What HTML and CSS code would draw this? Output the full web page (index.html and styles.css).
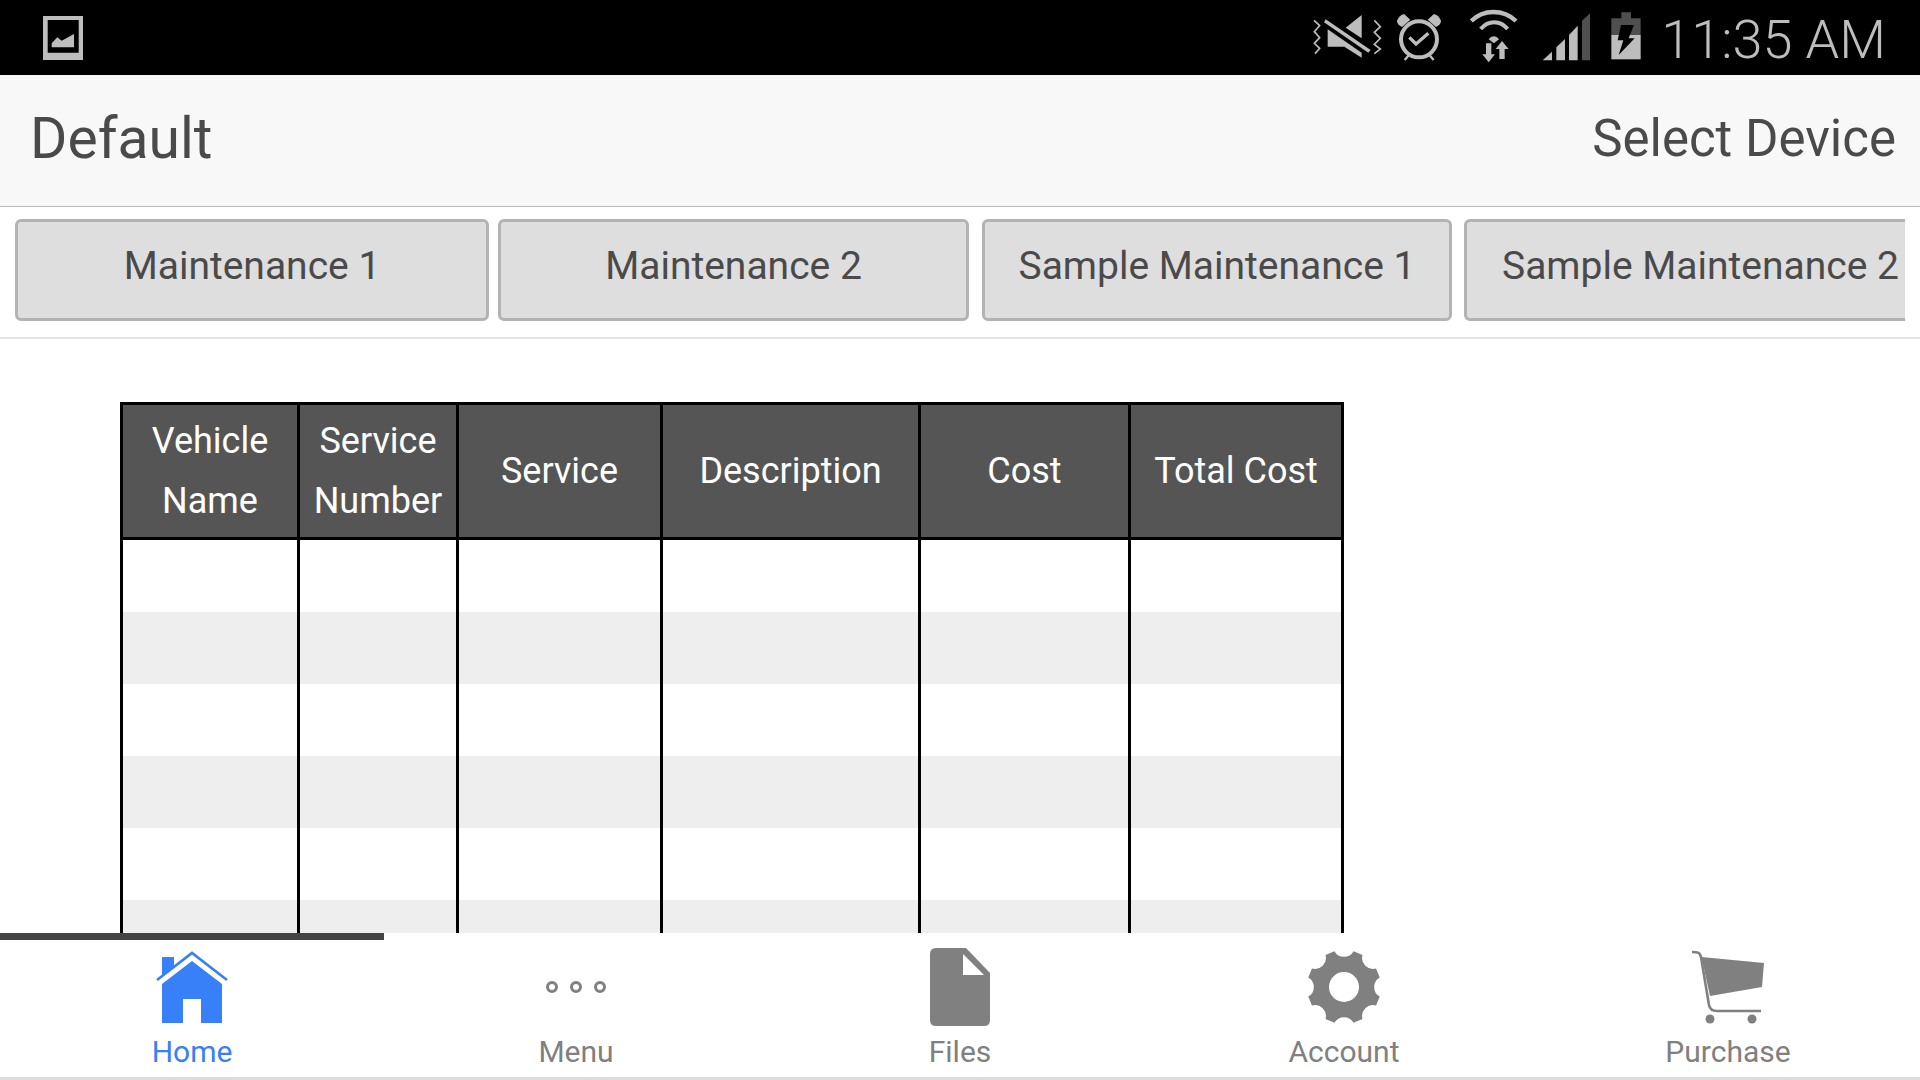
FILE: index.html
```html
<!DOCTYPE html>
<html lang="en">
<head>
<meta charset="utf-8">
<title>Maintenance</title>
<link rel="stylesheet" href="styles.css">
</head>
<body>
<div class="app">
  <div class="status">
    <svg class="pic" viewBox="0 0 40 44" width="40" height="44"><path fill="#bdbdbd" fill-rule="evenodd" d="M0 0H40V44H0ZM4.7 4V36.7H35.7V4ZM8.7 31.3V27.3L14.3 21.3L18.7 24.7L31 18V31.3Z"/></svg>
    <div class="status-right">
      <svg viewBox="0 0 450 195" width="150" height="65">
        <g fill="#bdbdbd">
          <path d="M62 43L197 135L190 143L57 52Z"/>
          <path d="M170 30V100L122 68Z"/>
          <path d="M68 73L170 143V158L118 125H68Z"/>
          <path d="M276 48C280 36 290 28 298 28L316 44L291 66C282 62 276 56 276 48Z"/>
          <path d="M408 48C404 36 394 28 386 28L368 44L393 66C402 62 408 56 408 48Z"/>
        </g>
        <g fill="none" stroke="#bdbdbd">
          <path stroke-width="5" d="M27 46L44 62L28 80L44 98L28 115L44 130L30 146"/>
          <path stroke-width="5" d="M208 46L226 65L208 82L226 100L208 118L226 132L208 146"/>
          <circle cx="342" cy="103" r="54" stroke-width="12"/>
          <path stroke-width="10" d="M313 97L333 117L370 85"/>
          <path stroke-width="7" d="M312 150L299 165M373 150L386 165"/>
        </g>
      </svg>
      <svg class="ico-net" viewBox="0 0 570 195" width="190" height="65">
        <g fill="none" stroke="#bdbdbd">
          <path stroke-width="13" d="M34 48C70 12 130 12 168 48"/>
          <path stroke-width="12" d="M62 72C85 45 120 45 143 72"/>
        </g>
        <g fill="#bdbdbd">
          <path d="M86 103C95 91 108 91 117 103L102 115Z"/>
          <path d="M78 115H94V148H105L86 172L67 148H78Z"/>
          <path d="M118 162V132H107L126 108L146 132H134V162Z"/>
          <path d="M248 166L276 140V166Z"/>
          <path d="M289 166V127L315 102V166Z"/>
          <path d="M327 166V90L353 62V166Z"/>
          <path d="M454 90H542V163H454Z"/>
        </g>
        <path fill="#4f4f4f" d="M366 166V47L390 25V166Z"/>
        <path fill="#4f4f4f" d="M454 40H484V22H513V40H542V90H454Z"/>
        <path fill="#000" d="M483 60H522L506 100H524L476 150L490 106H473Z"/>
      </svg>
      <span class="clock">11:35 AM</span>
    </div>
  </div>
  <header class="top">
    <h1 class="title">Default</h1>
    <span class="device">Select Device</span>
  </header>
  <nav class="tabs">
    <div class="tab-clip">
      <button class="tab tab-a">Maintenance 1</button>
      <button class="tab tab-b">Maintenance 2</button>
      <button class="tab tab-c">Sample Maintenance 1</button>
      <button class="tab tab-d">Sample Maintenance 2</button>
    </div>
  </nav>
  <main class="content">
    <table class="grid">
      <colgroup><col class="c1"><col class="c2"><col class="c3"><col class="c4"><col class="c5"><col class="c6"></colgroup>
      <thead>
        <tr><th>Vehicle<br>Name</th><th>Service<br>Number</th><th>Service</th><th>Description</th><th>Cost</th><th>Total Cost</th></tr>
      </thead>
      <tbody>
        <tr><td></td><td></td><td></td><td></td><td></td><td></td></tr>
        <tr><td></td><td></td><td></td><td></td><td></td><td></td></tr>
        <tr><td></td><td></td><td></td><td></td><td></td><td></td></tr>
        <tr><td></td><td></td><td></td><td></td><td></td><td></td></tr>
        <tr><td></td><td></td><td></td><td></td><td></td><td></td></tr>
        <tr><td></td><td></td><td></td><td></td><td></td><td></td></tr>
      </tbody>
    </table>
  </main>
  <footer class="bar">
    <div class="bar-mark"></div>
    <div class="item active">
      <svg viewBox="0 0 72 72" width="72" height="72"><path fill="#3880f8" d="M6 6H18V16L6 25ZM36 10L66 33V72H45V48H27V72H6V33Z"/><path fill="none" stroke="#3880f8" stroke-width="2.6" d="M1 29L36 2L71 29"/></svg>
      <span>Home</span>
    </div>
    <div class="item">
      <svg viewBox="0 0 72 72" width="72" height="72"><g fill="none" stroke="#808080" stroke-width="3"><circle cx="12" cy="36" r="4.5"/><circle cx="36" cy="36" r="4.5"/><circle cx="60" cy="36" r="4.5"/></g></svg>
      <span>Menu</span>
    </div>
    <div class="item">
      <svg viewBox="0 0 72 72" width="72" height="72"><path fill="#808080" d="M12 -3H42L66 22V69Q66 75 60 75H12Q6 75 6 69V3Q6 -3 12 -3Z"/><path fill="#fff" d="M39 3V24H60Z"/></svg>
      <span>Files</span>
    </div>
    <div class="item">
      <svg viewBox="0 0 72 72" width="72" height="72"><path fill="#808080" fill-rule="evenodd" d="M26.42 .26A11 11 0 0 0 45.58 .26L54.5 3.96A11 11 0 0 0 68.04 17.5L71.74 26.42A11 11 0 0 0 71.74 45.58L68.04 54.5A11 11 0 0 0 54.5 68.04L45.58 71.74A11 11 0 0 0 26.42 71.74L17.5 68.04A11 11 0 0 0 3.96 54.5L.26 45.58A11 11 0 0 0 .26 26.42L3.96 17.5A11 11 0 0 0 17.5 3.96ZM51 36A15 15 0 1 0 21 36A15 15 0 1 0 51 36Z"/></svg>
      <span>Account</span>
    </div>
    <div class="item">
      <svg viewBox="0 0 72 72" width="72" height="72"><path fill="none" stroke="#808080" stroke-width="2.6" d="M0 1C5 1 8 1 9 6L17 54C18 59 21 60 25 60H69"/><path fill="#808080" d="M9.5 6L72 12L70 36L18 45Z"/><circle cx="18" cy="68" r="4.5" fill="#808080"/><circle cx="60" cy="68" r="4.5" fill="#808080"/></svg>
      <span>Purchase</span>
    </div>
  </footer>
</div>
</body>
</html>
```
FILE: styles.css
```css
* { box-sizing: border-box; }
html, body { margin: 0; padding: 0; }
body { font-family: Roboto, "Liberation Sans", sans-serif; background: #fff; }
.app { width: 1920px; height: 1080px; display: flex; flex-direction: column; overflow: hidden; }

.status { height: 75px; flex: none; background: #000; display: flex; align-items: center; justify-content: space-between; padding: 0 34px 0 43px; }
.pic { display: block; align-self: flex-start; margin-top: 16px; }
.status-right { display: flex; align-items: center; }
.status-right svg { display: block; flex: none; }
.ico-net { margin-left: 5px; }
.clock { margin-left: 11px; padding-top: 5px; font-size: 54px; font-weight: 300; color: #bdbdbd; line-height: 70px; white-space: nowrap; }

.top { height: 132px; flex: none; background: #f8f8f8; border-bottom: 1px solid #b9b9b9; display: flex; align-items: center; justify-content: space-between; padding: 0 24px 5px 30px; color: #4a4a4a; }
.title { margin: 0; font-size: 57px; font-weight: 400; }
.device { font-size: 51px; }

.tabs { height: 132px; flex: none; padding: 12px 15px 0; border-bottom: 2px solid #e4e4e4; }
.tab-clip { display: flex; height: 102px; overflow: hidden; }
.tab { flex: none; height: 102px; padding: 0 0 9px; background: #dedede; border: 3px solid #b3b3b3; border-radius: 6px; font: 400 39px Roboto, sans-serif; color: #4a4a4a; white-space: nowrap; }
.tab-a { width: 474px; }
.tab-b { width: 471px; margin-left: 9px; }
.tab-c { width: 470px; margin-left: 13px; }
.tab-d { width: 470px; margin-left: 12px; padding-left: 35px; text-align: left; }

.content { flex: 1; min-height: 0; overflow: hidden; padding: 63px 0 0 120px; }
.grid { border-collapse: separate; border-spacing: 0; table-layout: fixed; width: 1224px; border: 3px solid #000; border-bottom: 0; }
.c1 { width: 177px; }
.c2 { width: 159px; }
.c3 { width: 204px; }
.c4 { width: 258px; }
.c5 { width: 210px; }
.c6 { width: 210px; }
.grid th { background: #555; color: #fff; font-size: 36px; font-weight: 400; line-height: 60px; padding: 6px 0; text-align: center; border-right: 3px solid #000; border-bottom: 3px solid #000; }
.grid td { height: 72px; padding: 0; border-right: 3px solid #000; }
.grid th:last-child, .grid td:last-child { border-right: 0; }
.grid tbody tr:nth-child(even) td { background: #eee; }

.bar { height: 147px; flex: none; position: relative; background: #fff; border-bottom: 3px solid #ddd; display: flex; padding-top: 18px; }
.bar-mark { position: absolute; left: 0; top: 0; width: 384px; height: 7px; background: #444; }
.item { width: 384px; display: flex; flex-direction: column; align-items: center; color: #808080; font-size: 30px; }
.item svg { display: block; overflow: visible; }
.item span { margin-top: 11px; line-height: 36px; }
.item.active { color: #3880f8; }
```
